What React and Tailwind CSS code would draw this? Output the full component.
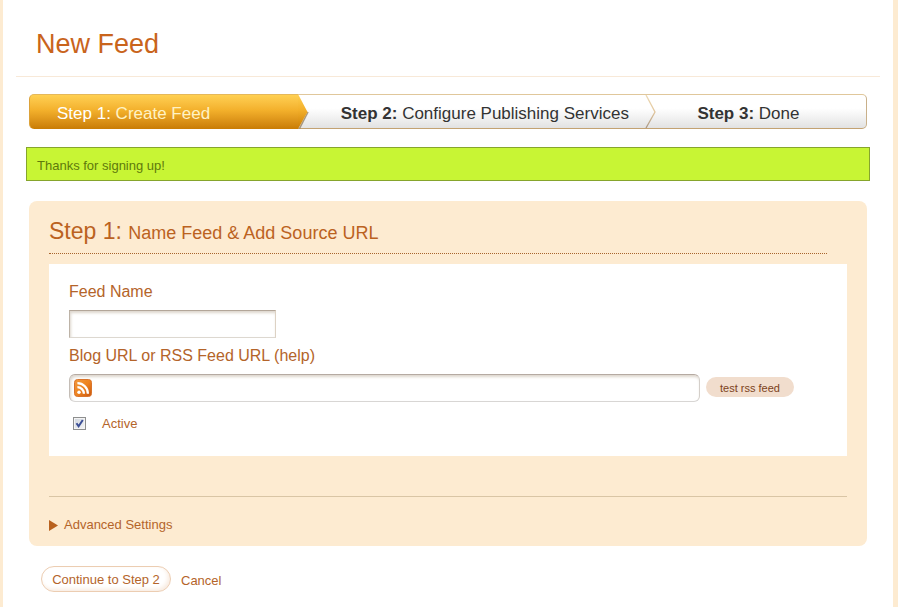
import React from "react";

function RssIcon() {
  return (
    <svg className="size-[18px] shrink-0" viewBox="0 0 18 18" aria-hidden="true">
      <defs>
        <linearGradient id="rss" x1="0" y1="0" x2="1" y2="1">
          <stop offset="0" stopColor="#f29a3c" />
          <stop offset="0.5" stopColor="#ee8420" />
          <stop offset="1" stopColor="#c9560d" />
        </linearGradient>
      </defs>
      <rect x="0.5" y="0.5" width="17" height="17" rx="3" fill="url(#rss)" stroke="#d9742c" />
      <circle cx="5" cy="13.2" r="1.7" fill="#fff" />
      <path d="M3.4 8.2a6.5 6.5 0 0 1 6.5 6.5M3.4 4.2A10.5 10.5 0 0 1 13.9 14.7" fill="none" stroke="#fff" strokeWidth="2.3" />
    </svg>
  );
}

function GoldArrow() {
  return (
    <svg className="h-[35px] w-3 shrink-0" viewBox="0 0 12 35" aria-hidden="true">
      <defs>
        <linearGradient id="gold" x1="0" y1="0" x2="0" y2="1">
          <stop offset="0" stopColor="#ffd052" />
          <stop offset="0.45" stopColor="#f3b02b" />
          <stop offset="1" stopColor="#c97c04" />
        </linearGradient>
        <linearGradient id="silver" x1="0" y1="0" x2="0" y2="1">
          <stop offset="0.4" stopColor="#ffffff" />
          <stop offset="1" stopColor="#e2e2e2" />
        </linearGradient>
      </defs>
      <rect width="12" height="35" fill="url(#silver)" />
      <path d="M0 .5H12" stroke="#e0c79b" />
      <path d="M0 34.5H12" stroke="#c3a272" />
      <path d="M10 18 1.5 34.5" stroke="#8c7450" strokeWidth="1.6" opacity="0.7" />
      <path d="M0 0 9.5 18 0 35Z" fill="url(#gold)" />
    </svg>
  );
}

function OutlineArrow() {
  return (
    <svg className="h-[33px] w-3 shrink-0" viewBox="0 0 12 33" aria-hidden="true">
      <defs>
        <linearGradient id="edge" x1="0" y1="0" x2="0" y2="1">
          <stop offset="0" stopColor="#ecd9b4" />
          <stop offset="0.5" stopColor="#e3c79d" />
          <stop offset="1" stopColor="#a89684" />
        </linearGradient>
      </defs>
      <path d="M1 0 10 17 1 33" fill="none" stroke="url(#edge)" strokeWidth="1.3" />
    </svg>
  );
}

function Steps() {
  return (
    <ol className="mx-[26px] mt-[17px] flex h-[35px] text-[17px] leading-[35px] text-[#333]">
      <li className="flex w-[33.5%] shrink-0" aria-current="step">
        <span className="flex-1 rounded-l-[5px] border-l border-t border-l-[#dca23a] border-t-[#e5b85a] bg-linear-to-b from-[#ffd052] via-[#f3b02b] via-45% to-[#c97c04] pl-[27px] pt-px text-[#fff2c4]">
          <span className="text-white">Step 1:</span> Create Feed
        </span>
        <GoldArrow />
      </li>
      <li className="flex flex-1 rounded-r-[5px] border-y border-r border-b-[#c3a272] border-r-[#c9b08a] border-t-[#e0c79b] bg-linear-to-b from-white from-40% to-[#e2e2e2]">
        <ol className="flex flex-1">
          <li className="flex w-[62.5%] pl-[31px]">
            <span className="flex-1 whitespace-nowrap pt-px">
              <b>Step 2:</b> Configure Publishing Services
            </span>
            <OutlineArrow />
          </li>
          <li className="flex-1 pl-10 pt-px">
            <b>Step 3:</b> Done
          </li>
        </ol>
      </li>
    </ol>
  );
}

export default function App() {
  return (
    <main className="min-h-screen border-l-[3px] border-r-[5px] border-[#fdebd1] bg-white pb-[15px] font-['Liberation_Sans',Arial,sans-serif] text-[13px] leading-5 text-[#b4642a]">
      <header className="mx-[13px] border-b border-[#f8e9d8] px-5 pb-3 pt-6">
        <h1 className="text-[27px] leading-10 text-[#c9641c]">New Feed</h1>
      </header>

      <Steps />

      <p role="status" className="mx-[23px] mt-[18px] border border-[#86a52c] bg-[#c8f534] px-[10px] pb-1.5 pt-[10px] leading-4 text-[#5f7a0c]">
        Thanks for signing up!
      </p>

      <form onSubmit={(e) => e.preventDefault()}>
        <section className="mx-[26px] mt-5 rounded-lg bg-[#fdebd1] px-5 pb-[11px] pt-3.5">
          <h2 className="mr-5 border-b border-dotted border-[#a8642c] pb-1 text-[23px] leading-8 text-[#bb621f]">
            Step 1: <span className="text-[18px]">Name Feed &amp; Add Source URL</span>
          </h2>

          <div className="mt-[10px] bg-white px-5 pb-[22px] pt-4">
            <label htmlFor="feed-name" className="block text-[16px] leading-6">
              Feed Name
            </label>
            <input
              id="feed-name"
              type="text"
              className="mt-1.5 block h-7 w-[207px] border border-b-[#ddd8d0] border-l-[#bdb3a7] border-r-[#ddd2c4] border-t-[#b3a699] bg-white px-2 shadow-[inset_1px_2px_3px_#ddd6cd] outline-none"
            />
            <label htmlFor="feed-url" className="mt-1.5 block text-[16px] leading-6">
              Blog URL or RSS Feed URL (help)
            </label>
            <div className="mt-1.5 flex items-center gap-1.5 pr-[33px]">
              <div className="flex h-7 flex-1 items-center gap-2 rounded-md border border-b-[#d8d6d4] border-l-[#c4bdb6] border-r-[#d4cfca] border-t-[#b5aaa2] bg-white px-1 shadow-[inset_1px_2px_3px_#ddd6cd]">
                <RssIcon />
                <input id="feed-url" type="text" className="min-w-0 flex-1 outline-none" />
              </div>
              <button type="button" className="mb-0.5 h-5 w-[88px] rounded-full bg-[#f1ddcd] pt-0.5 text-[11px] leading-4 text-[#7c4220]">
                test rss feed
              </button>
            </div>
            <div className="mt-[10px] flex items-center gap-4 pl-1">
              <span className="grid size-[13px]">
                <input
                  id="active"
                  type="checkbox"
                  defaultChecked
                  className="peer col-start-1 row-start-1 size-[13px] appearance-none border border-[#8e8f8f] bg-linear-to-br from-[#cfd5dd] to-[#f6f6f6] shadow-[inset_0_0_0_1px_#f4f4f4]"
                />
                <svg className="pointer-events-none invisible col-start-1 row-start-1 size-[13px] peer-checked:visible" viewBox="0 0 13 13" aria-hidden="true">
                  <path d="M3.5 6.2 5.6 9.3 9.8 3" fill="none" stroke="#3c4f96" strokeWidth="2" />
                </svg>
              </span>
              <label htmlFor="active" className="pt-0.5">
                Active
              </label>
            </div>
          </div>

          <hr className="mt-10 border-[#d9c5a5]" />
          <button type="button" className="mt-[18px] flex items-center gap-1.5">
            <svg className="h-[11px] w-[9px]" viewBox="0 0 9 11" aria-hidden="true">
              <path d="M0 0 9 5.5 0 11Z" fill="#b9621f" />
            </svg>
            Advanced Settings
          </button>
        </section>

        <div className="mt-5 flex items-center gap-[10px] px-[38px]">
          <button type="submit" className="h-[26px] w-[130px] rounded-full border border-[#eccdb2] bg-white pt-0.5 shadow-[inset_-2px_-2px_4px_#f8ebe0]">
            Continue to Step 2
          </button>
          <a href="#cancel" className="pt-1">
            Cancel
          </a>
        </div>
      </form>
    </main>
  );
}
